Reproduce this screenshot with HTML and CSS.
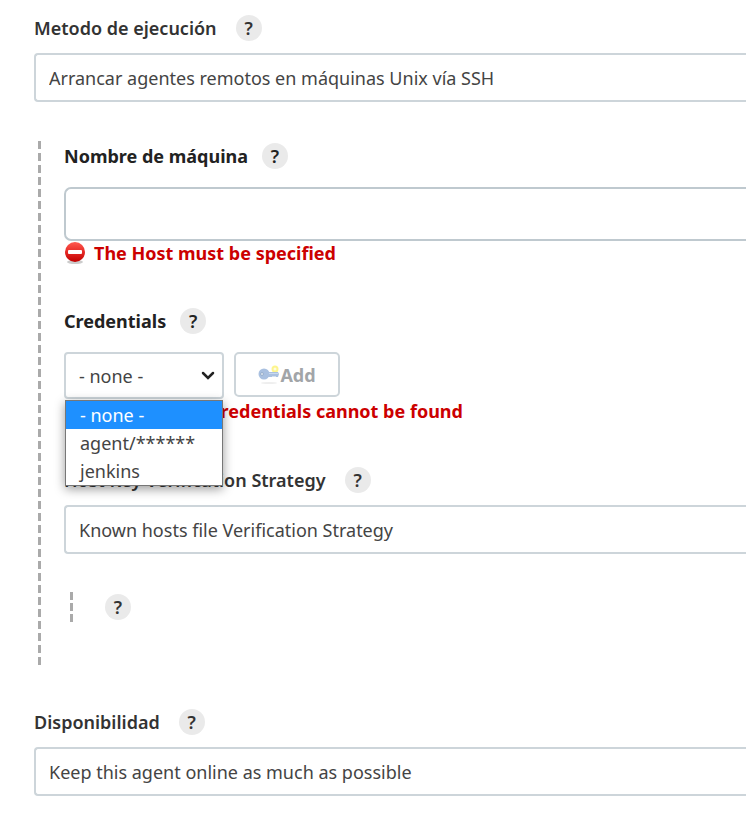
FILE: index.html
```
<!DOCTYPE html>
<html lang="es">

<head>
    <meta charset="UTF-8">
    <meta name="viewport" content="width=device-width, initial-scale=1.0">
    <title>Configurar nodo</title>
    <link rel="stylesheet" href="styles.css">
</head>

<body>
    <form class="config-form">
        <div class="field">
            <div class="field-label">
                <label for="launcher">Metodo de ejecución</label>
                <button type="button" class="help">?</button>
            </div>
            <select id="launcher" class="select">
                <option>Arrancar agentes remotos en máquinas Unix vía SSH</option>
            </select>
        </div>

        <div class="group">
            <div class="field host">
                <div class="field-label strong">
                    <label for="host">Nombre de máquina</label>
                    <button type="button" class="help">?</button>
                </div>
                <input type="text" id="host" class="text-input">
                <div class="error">
                    <svg class="error-icon" viewBox="0 0 22 22">
                        <defs>
                            <linearGradient id="red" x1="0" y1="0" x2="0" y2="1">
                                <stop offset="0" stop-color="#ff5a50" />
                                <stop offset="0.5" stop-color="#e62a26" />
                                <stop offset="1" stop-color="#c00000" />
                            </linearGradient>
                        </defs>
                        <ellipse cx="11" cy="20" rx="8" ry="2" fill="#ccc" />
                        <circle cx="11" cy="10" r="10" fill="url(#red)" />
                        <rect x="4" y="8" width="14" height="4" rx="1" fill="#fff" />
                    </svg>
                    <span>The Host must be specified</span>
                </div>
            </div>

            <div class="field credentials">
                <div class="field-label strong">
                    <label for="credentials">Credentials</label>
                    <button type="button" class="help">?</button>
                </div>
                <div class="credentials-row">
                    <div class="dropdown">
                        <select id="credentials" class="select small">
                            <option>- none -</option>
                            <option>agent/******</option>
                            <option>jenkins</option>
                        </select>
                        <svg class="chevron" viewBox="0 0 14 10">
                            <path d="M2 2l5 5 5-5" fill="none" stroke="#222" stroke-width="2.5" stroke-linecap="round" />
                        </svg>
                        <ul class="options" role="listbox" aria-label="Credentials">
                            <li role="option" class="selected" aria-selected="true">- none -</li>
                            <li role="option">agent/******</li>
                            <li role="option">jenkins</li>
                        </ul>
                    </div>
                    <button type="button" class="add-button" disabled>
                        <svg class="key-icon" viewBox="0 0 22 20">
                            <ellipse cx="11" cy="18" rx="8" ry="1" fill="#eee" />
                            <circle cx="17" cy="4" r="2.5" fill="#fffce0" stroke="#fdf58e" stroke-width="2" />
                            <circle cx="6" cy="9" r="5.5" fill="#a9c0e0" />
                            <path d="M10 7h10l1 2-1 3h-2l-1-1-1 1-1-1-1 1h-5z" fill="#a9c0e0" />
                            <path d="M11 8.500h9" stroke="#c8d8ee" stroke-width="1" />
                            <circle cx="4" cy="9" r="1.5" fill="#dfe6ee" stroke="#8fa8c8" stroke-width="0.8" />
                        </svg>
                        <span>Add</span>
                    </button>
                </div>
                <div class="error">
                    <svg class="error-icon" viewBox="0 0 22 22">
                        <circle cx="11" cy="10" r="10" fill="url(#red)" />
                        <rect x="4" y="8" width="14" height="4" rx="1" fill="#fff" />
                    </svg>
                    <span>The selected credentials cannot be found</span>
                </div>
            </div>

            <div class="field">
                <div class="field-label">
                    <label for="strategy">Host Key Verification Strategy</label>
                    <button type="button" class="help">?</button>
                </div>
                <select id="strategy" class="select">
                    <option>Known hosts file Verification Strategy</option>
                </select>
            </div>

            <div class="subgroup">
                <button type="button" class="help">?</button>
            </div>
        </div>

        <div class="field">
            <div class="field-label">
                <label for="availability">Disponibilidad</label>
                <button type="button" class="help">?</button>
            </div>
            <select id="availability" class="select">
                <option>Keep this agent online as much as possible</option>
            </select>
        </div>
    </form>
</body>

</html>
```
FILE: styles.css
```
* {
    box-sizing: border-box;
}

body {
    font-family: "Noto Sans", "Open Sans", sans-serif;
    font-size: 18px;
    line-height: 24px;
    margin: 0;
    color: #333;
    background-color: #fff;
    overflow-x: hidden;
}

button,
input,
select {
    font: inherit;
    color: inherit;
}

.config-form {
    padding: 15px 0 20px 34px;
}

.field-label {
    display: flex;
    align-items: center;
    gap: 19px;
    height: 26px;
    margin-bottom: 12px;
    font-weight: 600;
}

.field-label.strong {
    gap: 14px;
    margin-bottom: 18px;
    font-weight: 700;
    color: #222;
}

.help {
    width: 26px;
    height: 26px;
    padding: 0;
    border: none;
    border-radius: 50%;
    background-color: #eaeaea;
    font-weight: 600;
    line-height: 26px;
    text-align: center;
    cursor: pointer;
}

/* full width fields run off the right edge */
.select {
    display: block;
    appearance: none;
    width: 100%;
    height: 49px;
    padding: 0 13px;
    border: 2px solid #cdd5da;
    border-right: none;
    border-radius: 4px 0 0 4px;
    background-color: #fff;
    color: #444;
}

.text-input {
    display: block;
    width: 100%;
    height: 54px;
    padding: 0 13px;
    border: 2px solid #bfc9cf;
    border-right: none;
    border-radius: 7px 0 0 7px;
    background-color: #fff;
}

.group {
    margin: 39px 0 42px;
    padding: 2px 0 45px 30px;
    background: repeating-linear-gradient(to bottom, #aaa 0, #aaa 8px, transparent 8px, transparent 12px) 4px 0 / 3px 100% no-repeat;
}

.error {
    display: flex;
    align-items: center;
    gap: 8px;
    font-weight: 700;
    color: #c00;
}

.error-icon {
    width: 22px;
    height: 22px;
}

.host {
    margin-bottom: 43px;
}

.credentials {
    margin-bottom: 44px;
}

.credentials-row {
    display: flex;
    gap: 10px;
}

.dropdown {
    position: relative;
    width: 160px;
}

.select.small {
    height: 47px;
    border-right: 2px solid #cdd5da;
    border-radius: 4px;
}

.chevron {
    position: absolute;
    right: 9px;
    top: 19px;
    width: 14px;
    height: 10px;
    pointer-events: none;
}

.options {
    position: absolute;
    left: 1px;
    top: 48px;
    width: 158px;
    margin: 0;
    padding: 0;
    list-style: none;
    border: 1px solid #777;
    background-color: #fff;
    box-shadow: 0 3px 10px rgba(0, 0, 0, 0.4);
    color: #444;
}

.options li {
    padding: 0 14px;
    line-height: 28px;
}

.options .selected {
    background-color: #1e90ff;
    color: #fff;
}

.add-button {
    display: flex;
    align-items: center;
    justify-content: center;
    width: 106px;
    height: 45px;
    padding: 0;
    border: 2px solid #cdd5da;
    border-radius: 5px;
    background-color: #fff;
    font-weight: 700;
    color: #a2a5a8;
}

.key-icon {
    width: 22px;
    height: 20px;
}

.subgroup {
    display: flex;
    align-items: center;
    height: 30px;
    margin-top: 38px;
    padding-left: 41px;
    background: repeating-linear-gradient(to bottom, #aaa 0, #aaa 8px, transparent 8px, transparent 11px) 6px 0 / 3px 100% no-repeat;
}
```
